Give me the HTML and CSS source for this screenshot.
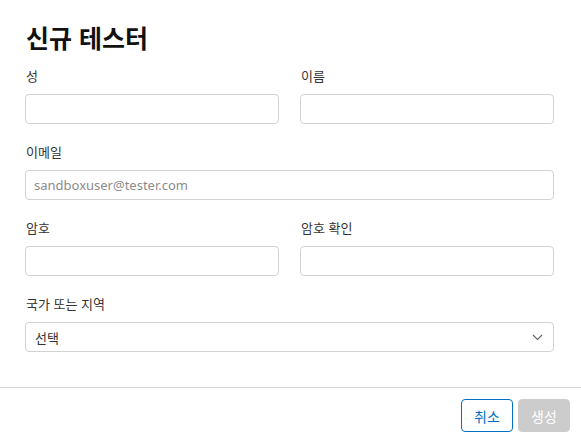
FILE: index.html
```html
<!DOCTYPE html>
<html lang="ko">
<head>
<meta charset="utf-8">
<link rel="stylesheet" href="styles.css">
</head>
<body>
<div class="dialog">
  <div class="content">
    <h1 class="title">신규 테스터</h1>
    <div class="row two">
      <div class="field">
        <label class="label">성</label>
        <input class="input" type="text">
      </div>
      <div class="field">
        <label class="label">이름</label>
        <input class="input" type="text">
      </div>
    </div>
    <div class="row">
      <div class="field">
        <label class="label">이메일</label>
        <input class="input" type="text" placeholder="sandboxuser@tester.com">
      </div>
    </div>
    <div class="row two">
      <div class="field">
        <label class="label">암호</label>
        <input class="input" type="password">
      </div>
      <div class="field">
        <label class="label">암호 확인</label>
        <input class="input" type="password">
      </div>
    </div>
    <div class="row">
      <div class="field">
        <label class="label">국가 또는 지역</label>
        <div class="select">
          <span class="select-text">선택</span>
          <svg class="chevron" width="11" height="7" viewBox="0 0 11 7"><path d="M1 1 L5.5 5.5 L10 1" fill="none" stroke="#666" stroke-width="1.2"/></svg>
        </div>
      </div>
    </div>
  </div>
  <div class="footer">
    <button class="btn btn-cancel">취소</button>
    <button class="btn btn-create" disabled>생성</button>
  </div>
</div>
</body>
</html>
```
FILE: styles.css
```css
* { box-sizing: border-box; }
html, body { margin: 0; padding: 0; background: #fff; }
body {
  font-family: "Noto Sans", "Noto Sans CJK KR", sans-serif;
  color: #333;
  width: 581px;
  height: 437px;
}
.dialog { display: flex; flex-direction: column; height: 437px; }
.content { padding: 19px 27px 0 25px; height: 388px; border-bottom: 1px solid #d6d6d6; }
.title {
  margin: 0 0 12px 1px;
  font-size: 25px;
  font-weight: 700;
  line-height: 36px;
  color: #111;
  font-family: "Noto Sans CJK KR", sans-serif;
}
.row { display: flex; gap: 21px; margin-bottom: 19px; }
.field { flex: 1; display: flex; flex-direction: column; }
.label {
  font-family: "Noto Sans CJK KR", sans-serif;
  font-size: 13px;
  line-height: 17px;
  color: #333;
  margin: 0 0 10px 1px;
  height: 17px;
}
.input {
  height: 30px;
  border: 1px solid #d2d2d2;
  border-radius: 4px;
  padding: 0 8px;
  font-family: "Noto Sans", sans-serif;
  font-size: 13px;
  color: #333;
  outline: none;
  width: 100%;
}
.input::placeholder { color: #8c8c8c; }
.select {
  height: 30px;
  border: 1px solid #d2d2d2;
  border-radius: 4px;
  padding: 0 10px 0 9px;
  display: flex;
  align-items: center;
  justify-content: space-between;
}
.select-text { font-family: "Noto Sans CJK KR", sans-serif; font-size: 13px; color: #333; }
.footer {
  display: flex;
  justify-content: flex-end;
  gap: 5px;
  padding: 11px 11px 0 0;
}
.btn {
  height: 33px;
  width: 52px;
  border-radius: 4px;
  font-family: "Noto Sans CJK KR", sans-serif;
  font-size: 14px;
  padding: 0;
}
.btn-cancel { background: #fff; border: 1px solid #0070c9; color: #0070c9; }
.btn-create { background: #cccccc; border: 1px solid #cccccc; color: #fff; }
```
